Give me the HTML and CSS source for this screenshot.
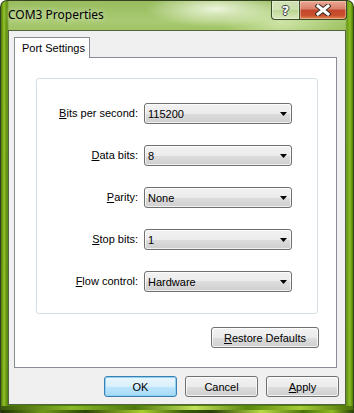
FILE: index.html
```html
<!DOCTYPE html>
<html>
<head>
    <meta charset="UTF-8">
    <title>COM3 Properties</title>
    <link rel="stylesheet" href="styles.css">
</head>
<body>

<div class="window">
    <div class="titlebar">
        <span class="title">COM3 Properties</span>
        <div class="caption-buttons">
            <div class="cap help">?</div>
            <div class="cap close">
                <svg width="16" height="12" viewBox="0 0 16 12">
                    <path d="M3 2 L13 10 M13 2 L3 10" stroke="#3b2a22" stroke-width="5" stroke-linecap="square"/>
                    <path d="M3 2 L13 10 M13 2 L3 10" stroke="#fff" stroke-width="3" stroke-linecap="square"/>
                </svg>
            </div>
        </div>
    </div>

    <div class="client">
        <div class="tabs">
            <div class="tab">Port Settings</div>
        </div>
        <div class="page">
            <div class="group">
                <div class="field-label"><u>B</u>its per second:</div>
                <div class="combo"><span>115200</span><svg width="7" height="4" viewBox="0 0 7 4"><polygon points="0,0 7,0 3.5,4" fill="#000"/></svg></div>

                <div class="field-label"><u>D</u>ata bits:</div>
                <div class="combo"><span>8</span><svg width="7" height="4" viewBox="0 0 7 4"><polygon points="0,0 7,0 3.5,4" fill="#000"/></svg></div>

                <div class="field-label"><u>P</u>arity:</div>
                <div class="combo"><span>None</span><svg width="7" height="4" viewBox="0 0 7 4"><polygon points="0,0 7,0 3.5,4" fill="#000"/></svg></div>

                <div class="field-label"><u>S</u>top bits:</div>
                <div class="combo"><span>1</span><svg width="7" height="4" viewBox="0 0 7 4"><polygon points="0,0 7,0 3.5,4" fill="#000"/></svg></div>

                <div class="field-label"><u>F</u>low control:</div>
                <div class="combo"><span>Hardware</span><svg width="7" height="4" viewBox="0 0 7 4"><polygon points="0,0 7,0 3.5,4" fill="#000"/></svg></div>
            </div>
            <div class="restore-row">
                <button class="btn restore"><u>R</u>estore Defaults</button>
            </div>
        </div>
        <div class="dialog-buttons">
            <button class="btn default">OK</button>
            <button class="btn">Cancel</button>
            <button class="btn"><u>A</u>pply</button>
        </div>
    </div>
</div>

</body>
</html>
```

FILE: styles.css
```css
body {
    margin: 0;
    font-family: "Liberation Sans", Arial, sans-serif;
    font-size: 11px;
    background-color: #fff;
}
.window {
    width: 354px;
    height: 413px;
    box-sizing: border-box;
    border: 1px solid #34421f;
    border-bottom: none;
    border-radius: 7px 7px 0 0;
    padding: 0 7px 8px;
    display: flex;
    flex-direction: column;
    background:
        linear-gradient(to right, #1e3204 0%, #6f9a18 12%, #2c4806 24%, #a8d02e 40%, #3a5c08 52%, #2a4206 60%, #b8dc44 74%, #4a740a 86%, #8fbc22 94%, #2a4406 100%) left bottom / 100% 3px no-repeat,
        linear-gradient(to right, #3a5a0a 0%, #8ab82a 20%, #4e780e 38%, #c2e05a 55%, #5a860e 70%, #a6cc36 85%, #4a700a 100%) left bottom 3px / 100% 4px no-repeat,
        radial-gradient(ellipse 70px 18px at 215px 8px, rgba(240, 248, 225, 0.95), rgba(240, 248, 225, 0)),
        radial-gradient(ellipse 60px 22px at 280px 22px, rgba(215, 235, 180, 0.8), rgba(215, 235, 180, 0)),
        linear-gradient(to right, #4d7c0a 0, #94c228 3px, #5a8a10 6px, rgba(90, 138, 16, 0) 8px),
        linear-gradient(to left, #4d7c0a 0, #8cbc24 3px, #6a9a1a 6px, rgba(90, 138, 16, 0) 8px),
        linear-gradient(to bottom, #98bc5e 0, #a9ca72 20px, #94bb52 40px, #7aa632 35%, #609016 70%, #4e7e0a 100%);
}
.titlebar {
    height: 29px;
    display: flex;
    align-items: flex-start;
}
.title {
    font-family: "Noto Sans", "Open Sans", sans-serif;
    font-size: 12px;
    line-height: 16px;
    margin-top: 6px;
    color: #000;
    text-shadow: 0 0 6px rgba(255, 255, 255, 0.8);
    flex: 1;
}
.caption-buttons {
    display: flex;
    margin-right: -1px;
}
.cap {
    height: 19px;
    box-sizing: border-box;
    border: 1px solid #3c4a2c;
    border-top: none;
    display: flex;
    align-items: center;
    justify-content: center;
}
.help {
    width: 28px;
    border-right: none;
    border-radius: 0 0 0 4px;
    background: linear-gradient(to bottom, rgba(255, 255, 255, 0.55) 0%, rgba(255, 255, 255, 0.35) 50%, rgba(200, 220, 170, 0.3) 50%, rgba(230, 240, 210, 0.6) 100%);
    box-shadow: inset 0 0 0 1px rgba(255, 255, 255, 0.4);
    font-family: "DejaVu Sans", sans-serif;
    font-weight: bold;
    font-size: 13px;
    color: #fff;
    text-shadow: 1px 0 0 #3a3a3a, -1px 0 0 #3a3a3a, 0 1px 0 #3a3a3a, 0 -1px 0 #3a3a3a;
}
.close {
    width: 48px;
    border-radius: 0 0 4px 0;
    background: linear-gradient(to bottom, #e9a896 0%, #d98068 45%, #c2452a 50%, #c9502e 80%, #e08a52 100%);
    box-shadow: inset 0 0 0 1px rgba(255, 220, 200, 0.45);
}
.client {
    flex: 1;
    border: 1px solid #55643f;
    background-color: #f0f0f0;
    padding: 6px 8px 7px 5px;
    display: flex;
    flex-direction: column;
}
.tabs {
    display: flex;
}
.tab {
    position: relative;
    z-index: 1;
    height: 21px;
    width: 76px;
    box-sizing: border-box;
    border: 1px solid #898c95;
    border-bottom: none;
    background-color: #fff;
    margin-bottom: -1px;
    padding: 4px 0 0 7px;
    white-space: nowrap;
}
.page {
    height: 311px;
    box-sizing: border-box;
    border: 1px solid #898c95;
    background-color: #fff;
    padding: 20px 0 0 21px;
}
.group {
    width: 282px;
    height: 236px;
    box-sizing: border-box;
    border: 1px solid #d5dfe5;
    border-radius: 3px;
    padding-top: 24px;
    display: grid;
    grid-template-columns: 101px 148px;
    grid-auto-rows: 21px;
    column-gap: 6px;
    row-gap: 21px;
    align-content: start;
}
.field-label {
    text-align: right;
    line-height: 21px;
    white-space: nowrap;
}
.combo {
    box-sizing: border-box;
    border: 1px solid #707070;
    border-radius: 3px;
    background: linear-gradient(to bottom, #f2f2f2 0%, #ebebeb 50%, #dddddd 50%, #cfcfcf 100%);
    box-shadow: inset 0 0 0 1px rgba(255, 255, 255, 0.7);
    display: flex;
    align-items: center;
    justify-content: space-between;
    padding: 0 4px 0 3px;
}
.restore-row {
    width: 283px;
    display: flex;
    justify-content: flex-end;
    margin-top: 13px;
}
.btn {
    font-family: "Liberation Sans", Arial, sans-serif;
    font-size: 11px;
    color: #000;
    height: 21px;
    width: 73px;
    box-sizing: border-box;
    padding: 0;
    border: 1px solid #707070;
    border-radius: 3px;
    background: linear-gradient(to bottom, #f2f2f2 0%, #ebebeb 50%, #dddddd 50%, #cfcfcf 100%);
    box-shadow: inset 0 0 0 1px rgba(255, 255, 255, 0.75);
}
.btn.restore {
    width: 108px;
}
.btn.default {
    border-color: #3c7fb1;
    background: linear-gradient(to bottom, #eaf6fd 0%, #d9f0fc 50%, #bee6fd 50%, #a7d9f5 100%);
    box-shadow: inset 0 0 0 1px #8fd1f5;
}
.dialog-buttons {
    display: flex;
    justify-content: flex-end;
    gap: 8px;
    margin-top: 8px;
    margin-right: -2px;
}
```
